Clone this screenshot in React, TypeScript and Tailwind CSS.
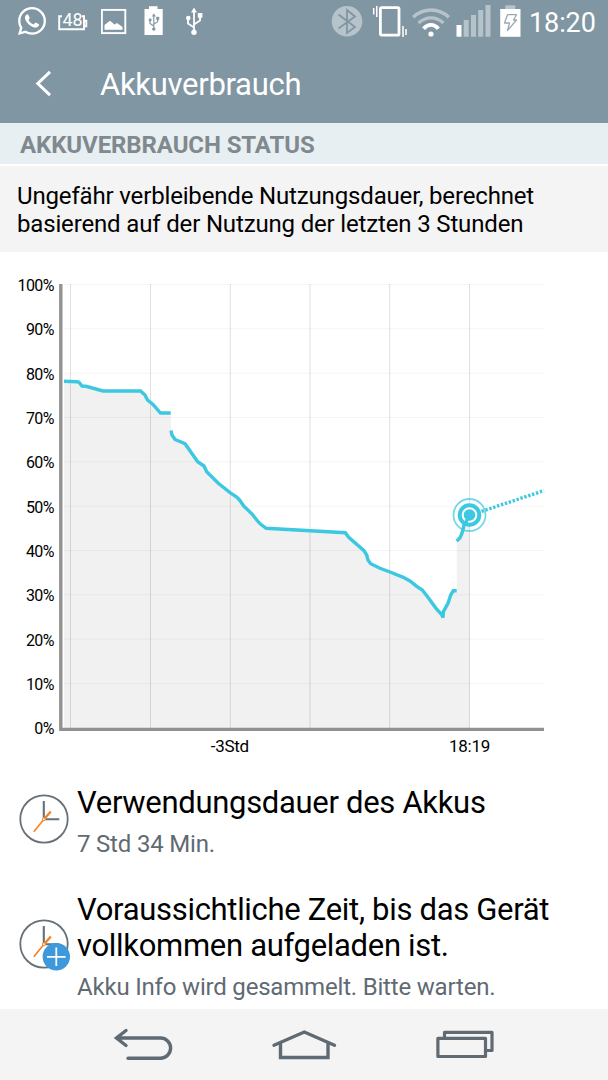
import type { ReactNode } from "react";
import { FaWhatsapp } from "react-icons/fa";

const historyLines = [
  "64,381.3 77,381.7 79,382.3 82,386 86,386.3 103,391 140.5,391 145,395 147.5,400 153,404.5 160.5,413 170.7,413",
  "171,430.5 172,435 175,439.5 185,443.7 197.7,461.7 204,466 206.7,471.7 218.3,483.3 230,492.7 236.7,497 239.3,499.7 244,506.3 252.3,514.3 257.3,520.7 260.7,524.3 266.3,528.3 345.3,532.7 348.7,537.3 364,550.7 366.7,555 368,560 370.7,563.7 380,568.3 390,572 403.3,577.3 410,581 416.7,586.3 422.3,590 428.3,597.7 436,608.3 441.7,614.5 443,617.5 443.5,611.3 448,603.3 450.7,595 453.3,590.7 456.7,590.7",
  "456.7,541.2 460,537.7 462,533.3 464,525 469.5,515",
];

const percentLabels = [100, 90, 80, 70, 60, 50, 40, 30, 20, 10, 0];
const timeGrid = [70.5, 150.5, 230.3, 310, 389.7, 469.5];

function UsbGlyph() {
  return (
    <g>
      <path d="M8 4V26M8 20L2 16V10M8 17L14 13V8" fill="none" stroke="currentColor" strokeWidth="1.8" strokeLinejoin="round" />
      <path d="M8 0L11 5H5Z" fill="currentColor" />
      <circle cx="2.3" cy="10.5" r="2.3" fill="currentColor" />
      <rect x="11.8" y="5.5" width="4.6" height="4.6" fill="currentColor" />
      <circle cx="8" cy="24.7" r="2.7" fill="currentColor" />
    </g>
  );
}

function StatusBar() {
  return (
    <div className="flex h-[44px] items-start pt-[5px] pl-[16px] text-white">
      <FaWhatsapp size={32} className="shrink-0" />

      {/* battery level */}
      <svg width="30" height="32" viewBox="0 0 30 32" className="ml-[10px] shrink-0">
        <path d="M4 11.3H1.2V24.2H26V11.3H24M26 15.8H28.3V21.4H26" fill="none" stroke="currentColor" strokeWidth="1.9" />
        <text x="14.4" y="20.6" textAnchor="middle" fontSize="18" letterSpacing="-0.3" fill="currentColor">48</text>
      </svg>

      {/* gallery */}
      <svg width="26" height="32" viewBox="0 0 26 32" className="ml-[13px] shrink-0">
        <rect x="0.9" y="4.9" width="23.4" height="23.2" fill="none" stroke="currentColor" strokeWidth="1.9" />
        <path d="M3.5 24.7V20L9 15.8L13.5 19.5L16 18L21.5 22V24.7Z" fill="currentColor" />
      </svg>

      {/* usb charging */}
      <svg width="20" height="32" viewBox="0 0 20 32" className="ml-[17px] shrink-0">
        <path d="M5 1.2H13.5V4H18.7V30H0.5V4H5Z" fill="currentColor" />
        <g transform="translate(4.7 8.3) scale(.64)" className="text-[#8096a3]">
          <UsbGlyph />
        </g>
      </svg>

      <svg width="18" height="32" viewBox="0 0 18 32" className="ml-[22px] shrink-0">
        <g transform="translate(0 2.6)">
          <UsbGlyph />
        </g>
      </svg>

      {/* bluetooth */}
      <svg width="32" height="32" viewBox="0 0 32 32" className="ml-[127px] shrink-0">
        <circle cx="16" cy="16.3" r="15.3" fill="#b7c3cb" />
        <path d="M7.5 9.5L24 22L16 28V5L24 11.5L7.5 23.5" fill="none" stroke="#8096a3" strokeWidth="1.8" />
      </svg>

      {/* vibrate */}
      <svg width="36" height="32" viewBox="0 0 36 32" className="ml-[9px] shrink-0">
        <rect x="8.4" y="2.6" width="18.6" height="27.6" rx="1.2" fill="none" stroke="currentColor" strokeWidth="2.8" />
        <path d="M4.8 1V12M1.7 3V9.5M31 21V32M34 24V30" fill="none" stroke="currentColor" strokeWidth="1.5" />
      </svg>

      {/* wifi */}
      <svg width="38" height="32" viewBox="0 0 38 32" className="ml-[4px] shrink-0">
        <g fill="none" strokeWidth="3.4">
          <path d="M1.2 12.2C11.5 2.6 26.5 2.6 36.8 12.2" stroke="#b7c3cb" />
          <path d="M6.6 18C13.8 11.2 24.2 11.2 31.4 18" stroke="#b7c3cb" />
          <path d="M11.6 23.8C15.8 18.6 22.2 18.6 26.4 23.8" stroke="currentColor" strokeWidth="3.8" />
        </g>
        <circle cx="19" cy="29" r="2.6" fill="currentColor" />
      </svg>

      {/* signal */}
      <svg width="35" height="32" viewBox="0 0 35 32" className="ml-[6px] shrink-0">
        <rect x="0.5" y="20" width="5" height="11.7" fill="currentColor" />
        <path d="M7.7 15H12.7V31.7H7.7ZM15 10H20V31.7H15ZM22.2 5H27.2V31.7H22.2ZM29.5 0H34.5V31.7H29.5Z" fill="#b7c3cb" />
      </svg>

      {/* charging */}
      <svg width="21" height="32" viewBox="0 0 21 32" className="ml-[9px] shrink-0">
        <rect x="5.3" y="0.3" width="10" height="4" fill="#b7c3cb" />
        <rect x="0.2" y="4" width="20.3" height="27.8" fill="currentColor" />
        <path d="M7.5 9.7H16.5L13.5 15H16.5L7.5 25.5L9.5 18H4.5Z" fill="none" stroke="#9aaab4" strokeWidth="1.3" strokeLinejoin="round" />
      </svg>

      <span className="ml-[8px] text-[27px] leading-[36px] tracking-[-0.1px] whitespace-nowrap">18:20</span>
    </div>
  );
}

function BatteryChart() {
  return (
    <svg width="608" height="516" viewBox="0 252 608 516" className="block">
      <polygon points={`64,728 ${historyLines.join(" ")} 469.5,728`} fill="#f1f1f1" />

      {percentLabels.map((value, i) => (
        <g key={value}>
          {value > 0 && (
            <line x1="64" x2="544" y1={284.5 + i * 44.33} y2={284.5 + i * 44.33} stroke="#000" strokeOpacity="0.045" />
          )}
          <text x="53.8" y={290.9 + i * 44.33} textAnchor="end" fontSize="16" letterSpacing="-0.6" fill="#000">
            {value}%
          </text>
        </g>
      ))}
      {timeGrid.map((x) => (
        <line key={x} x1={x} x2={x} y1="284" y2="728" stroke="#000" strokeOpacity="0.12" />
      ))}

      <path d="M60.8 284V729.4H544" fill="none" stroke="#929292" strokeWidth="3.4" />

      {historyLines.map((points) => (
        <polyline key={points} points={points} fill="none" stroke="#3bc8e0" strokeWidth="3.4" strokeMiterlimit="3" />
      ))}
      <line x1="481.5" y1="511.4" x2="544" y2="490.6" stroke="#3bc8e0" strokeWidth="3.4" strokeDasharray="2.4 1.7" />

      {/* current level */}
      <circle cx="469.5" cy="515" r="16" fill="none" stroke="#3bc8e0" strokeOpacity="0.7" strokeWidth="1.8" />
      <circle cx="469.5" cy="515" r="9.8" fill="#fff" stroke="#3bc8e0" strokeWidth="4" />
      <circle cx="469.5" cy="515" r="5.8" fill="#3bc8e0" />
      <path d="M465.5 523L469.5 515" stroke="#3bc8e0" strokeWidth="3.4" />

      <text x="229.8" y="751.5" textAnchor="middle" fontSize="17" letterSpacing="-0.3" fill="#000">-3Std</text>
      <text x="469.5" y="751.5" textAnchor="middle" fontSize="17" letterSpacing="-0.3" fill="#000">18:19</text>
    </svg>
  );
}

function ClockIcon({ plus = false }: { plus?: boolean }) {
  return (
    <svg width="52" height="52" viewBox="0 0 52 52" className="mb-[4px] shrink-0">
      <circle cx="25" cy="25" r="23.7" fill="#fff" stroke="#667078" strokeWidth="1.8" />
      <path d="M24.8 7V25.2H40.3" fill="none" stroke="#667078" strokeWidth="2.1" />
      <path d="M14.8 37.8L25 25.2" stroke="#f58220" strokeWidth="1.6" />
      <path d="M25 25.2L31.8 17.6" stroke="#f58220" strokeWidth="2.3" />
      <circle cx="24.9" cy="25.2" r="1.4" fill="#fff" stroke="#f58220" strokeWidth="1" />
      {plus && (
        <>
          <circle cx="37.3" cy="37.8" r="13.7" fill="#3d98dc" />
          <path d="M28 37.8H46.6M37.3 28.5V47.1" stroke="#fff" strokeWidth="1.8" />
        </>
      )}
    </svg>
  );
}

function InfoRow({ icon, title, detail }: { icon: ReactNode; title: ReactNode; detail: string }) {
  return (
    <div className="flex items-center pl-[19px]">
      {icon}
      <div className="ml-[6px] whitespace-nowrap">
        <h2 className="text-[31px] leading-[36px] tracking-[-0.31px] text-black">{title}</h2>
        <p className="mt-[9px] text-[24px] leading-[28px] tracking-[-0.19px] text-[#5f6a73]">{detail}</p>
      </div>
    </div>
  );
}

export default function App() {
  return (
    <div className="flex h-[1080px] w-[608px] flex-col overflow-hidden bg-white font-['Roboto',sans-serif]">
      <header className="h-[123px] shrink-0 bg-[#8096a3]">
        <StatusBar />
        <div className="flex h-[79px] items-center pl-[34px] text-white">
          <svg width="18" height="28" viewBox="0 0 18 28" className="shrink-0">
            <path d="M16 1.8L3.8 13.5L16 25.2" fill="none" stroke="currentColor" strokeWidth="3" />
          </svg>
          <h1 className="ml-[48px] pt-[2px] text-[31px] leading-[40px] tracking-[-0.3px]">Akkuverbrauch</h1>
        </div>
      </header>

      <div className="flex h-[43px] shrink-0 items-center border-b-2 border-white bg-[#e7eff3] pt-[3px] pl-[20px] text-[24px] font-bold tracking-[-0.1px] whitespace-nowrap text-[#80898d]">
        AKKUVERBRAUCH STATUS
      </div>
      <p className="h-[86px] shrink-0 bg-[#f4f4f4] pt-[16px] pl-[17px] text-[24px] leading-[28px] tracking-[-0.16px] whitespace-nowrap text-black">
        Ungefähr verbleibende Nutzungsdauer, berechnet
        <br />
        basierend auf der Nutzung der letzten 3 Stunden
      </p>

      <BatteryChart />

      <main className="flex flex-1 flex-col gap-[34px] pt-[17px]">
        <InfoRow icon={<ClockIcon />} title="Verwendungsdauer des Akkus" detail="7 Std 34 Min." />
        <InfoRow
          icon={<ClockIcon plus />}
          title={<>Voraussichtliche Zeit, bis das Gerät<br />vollkommen aufgeladen ist.</>}
          detail="Akku Info wird gesammelt. Bitte warten."
        />
      </main>

      <nav className="flex h-[71px] shrink-0 items-start bg-[#f4f4f4] pt-[17px] pl-[113px] text-[#5f6a72]">
        <svg width="62" height="38" viewBox="0 0 62 38" fill="none" stroke="currentColor" strokeWidth="3.4" strokeLinecap="round">
          <path d="M13 4.5L3.5 12L13 19.5M4 12H47.5A10.1 10.1 0 0 1 47.5 32.2H15" />
        </svg>
        <svg width="66" height="38" viewBox="0 0 66 38" fill="none" stroke="currentColor" strokeWidth="3.4" strokeLinecap="round" className="ml-[96px]">
          <path d="M3 19.2L33.3 6L63.5 19.2M9.5 17V31.5H57V17" />
        </svg>
        <svg width="62" height="38" viewBox="0 0 62 38" fill="none" stroke="currentColor" strokeWidth="3.2" strokeLinejoin="round" className="ml-[97px]">
          <path d="M3.9 12.3H51.5V30.5H3.9ZM10.5 12.3V6.3H58V24.5H51.5" />
        </svg>
      </nav>
    </div>
  );
}
